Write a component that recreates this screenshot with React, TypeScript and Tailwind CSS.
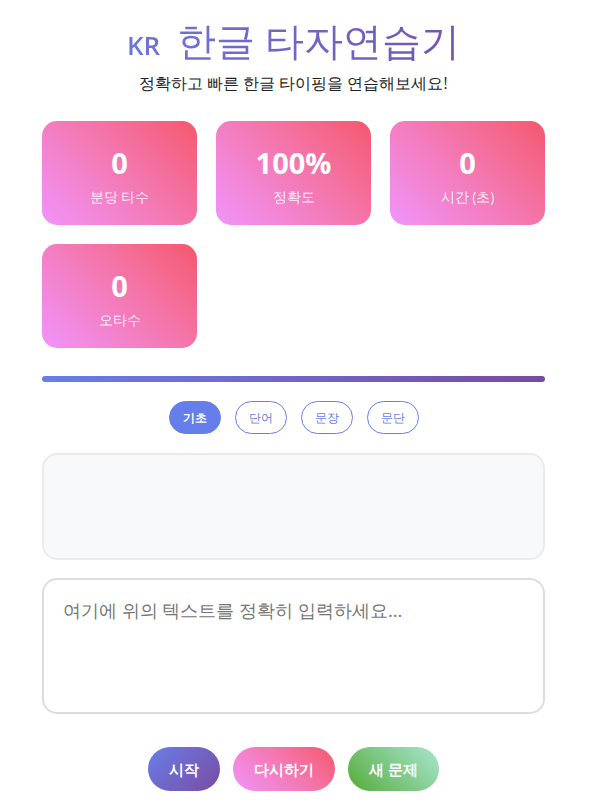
import React from "react";

const stats = [
  { value: "0", label: "분당 타수" },
  { value: "100%", label: "정확도" },
  { value: "0", label: "시간 (초)" },
  { value: "0", label: "오타수" },
];

const levels = ["기초", "단어", "문장", "문단"];

export default function App() {
  return (
    <div className="min-h-[803px] bg-white font-['Open_Sans',sans-serif] text-[#333]">
      <div className="w-[503px] ml-[42px] pt-[14px]">
        <h1 className="flex items-baseline justify-center gap-[17px] bg-linear-to-r from-[#667eea] to-[#764ba2] bg-clip-text text-transparent leading-[52px]">
          <span className="text-[26px] font-semibold">KR</span>
          <span className="text-[38.5px] font-normal">한글 타자연습기</span>
        </h1>
        <p className="mt-[1px] text-center text-[15.5px] leading-[22px] text-[#222]">
          정확하고 빠른 한글 타이핑을 연습해보세요!
        </p>

        <div className="mt-[27px] grid grid-cols-3 gap-x-[19px] gap-y-[19px]">
          {stats.map((s) => (
            <div
              key={s.label}
              className="flex h-[104px] flex-col items-center justify-center rounded-[15px] bg-linear-45 from-[#f093fb] to-[#f5576c] pt-[4px] text-white"
            >
              <div className="text-[29px] font-bold leading-[36px]">{s.value}</div>
              <div className="mt-[6px] text-[14px] leading-[19px] opacity-90">{s.label}</div>
            </div>
          ))}
        </div>

        <div className="mt-[28px] h-[6px] rounded-full bg-linear-to-r from-[#667eea] to-[#764ba2]" />

        <div className="mt-[19px] flex justify-center gap-[14px]">
          {levels.map((l, i) => (
            <button
              key={l}
              className={
                i === 0
                  ? "h-[33px] w-[52px] rounded-full border border-[#667eea] bg-[#667eea] text-[12px] font-semibold text-white"
                  : "h-[33px] w-[52px] rounded-full border border-[#667eea] bg-white text-[12px] text-[#667eea]"
              }
            >
              {l}
            </button>
          ))}
        </div>

        <div className="mt-[19px] h-[107px] rounded-[15px] border-2 border-[#e9ecef] bg-[#f8f9fa]" />

        <textarea
          placeholder="여기에 위의 텍스트를 정확히 입력하세요..."
          className="mt-[18px] block h-[136px] w-full resize-none rounded-[15px] border-2 border-[#ddd] bg-white px-[19px] py-[16px] text-[18.2px] leading-[28px] text-[#333] placeholder:text-[#757575] focus:outline-none"
        />

        <div className="mt-[33px] flex justify-center gap-[13px]">
          <button className="h-[44px] rounded-full bg-linear-135 from-[#667eea] to-[#764ba2] px-[21px] text-[15px] font-bold text-white">
            시작
          </button>
          <button className="h-[44px] rounded-full bg-linear-45 from-[#f093fb] to-[#f5576c] px-[21px] text-[15px] font-bold text-white">
            다시하기
          </button>
          <button className="h-[44px] rounded-full bg-linear-45 from-[#56ab2f] to-[#a8e6cf] px-[21px] text-[15px] font-bold text-white">
            새 문제
          </button>
        </div>
      </div>
    </div>
  );
}
